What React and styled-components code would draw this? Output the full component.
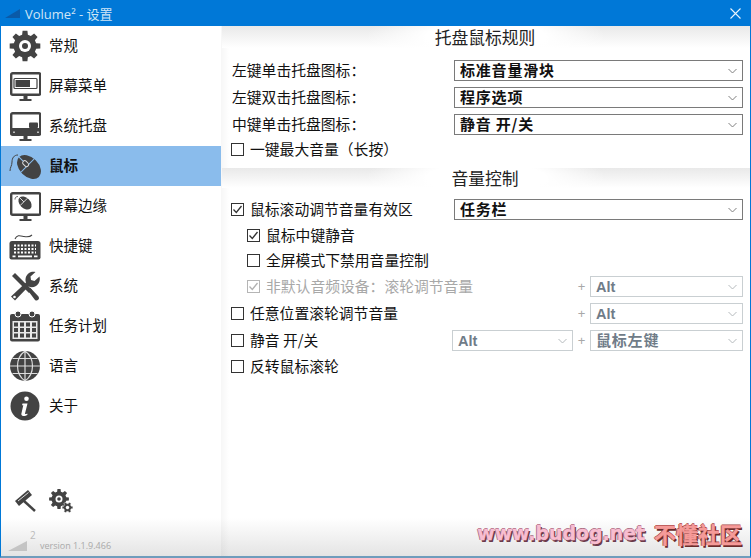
import React from "react";
import styled, { createGlobalStyle } from "styled-components";

const GlobalStyle = createGlobalStyle`
  html, body { margin: 0; padding: 0; overflow: hidden; background: #fff; }
  * { box-sizing: border-box; }
`;

const cjk = `"Noto Sans CJK SC", "Noto Sans", sans-serif`;
const ink = "#434343";

const Window = styled.div`
  position: relative;
  width: 751px;
  height: 558px;
  display: flex;
  flex-direction: column;
  border: 1px solid #0078d7;
  border-top: 0;
  border-bottom: 2px solid #6f9cbc;
  font-family: ${cjk};
  color: #111;
  overflow: hidden;
`;

const TitleBar = styled.div`
  height: 26px;
  flex: none;
  margin: 0 -1px;
  padding: 0 10px 0 5px;
  background: #0078d7;
  color: #cfe5f6;
  font-size: 13px;
  display: flex;
  align-items: center;
  gap: 5px;
`;

const TitleText = styled.span`
  flex: 1;
  font-family: "Open Sans", ${cjk};
`;

const Body = styled.div`
  flex: 1;
  display: flex;
  min-height: 0;
  background: linear-gradient(to bottom, #fff calc(100% - 38px), #e4e4e4 100%);
`;

const Sidebar = styled.nav`
  width: 220px;
  flex: none;
  display: flex;
  flex-direction: column;
`;

const NavItem = styled.div`
  height: 40px;
  padding-left: 8px;
  display: flex;
  align-items: center;
  gap: 8px;
  font-size: 14.5px;
  font-weight: ${(p) => (p.$active ? 700 : 400)};
  background: ${(p) => (p.$active ? "#8abcec" : "transparent")};
`;

const NavLabel = styled.span`
  padding-bottom: 4px;
`;

const NavIcon = styled.svg`
  width: 32px;
  height: 32px;
  flex: none;
`;

const Tools = styled.div`
  margin-top: auto;
  padding: 0 0 0 12px;
  display: flex;
  align-items: center;
  gap: 12px;
`;

const Version = styled.div`
  height: 43px;
  padding: 13px 0 0 7px;
  display: flex;
  color: #a9a9a9;
  font-family: "Open Sans", sans-serif;
  font-size: 9px;
`;

const VersionMark = styled.svg`
  width: 20px;
  height: 30px;
  flex: none;
  overflow: visible;
`;

const VersionText = styled.span`
  margin: 13px 0 0 12px;
`;

const Main = styled.main`
  flex: 1;
  min-width: 0;
  padding-left: 1px;
  display: flex;
  flex-direction: column;
  background: linear-gradient(to right, rgba(0, 0, 0, 0.035), rgba(0, 0, 0, 0) 8px);
`;

const SectionTitle = styled.h2`
  margin: ${(p) => p.$top}px 0 0;
  height: ${(p) => p.$height}px;
  flex: none;
  display: flex;
  align-items: center;
  justify-content: center;
  padding-right: 2px;
  font-size: 16.8px;
  font-weight: 400;
  color: #222;
  background: radial-gradient(ellipse 120px 30px at center, #fff 50%, rgba(255, 255, 255, 0) 100%),
    linear-gradient(to bottom, #e9e9e9, #fff);
`;

const Rows = styled.div`
  padding: 0 7px 0 10px;
`;

const Row = styled.div`
  height: 21px;
  margin-top: ${(p) => p.$top}px;
  padding-left: ${(p) => (p.$indent ? 16 : 0)}px;
  display: flex;
  align-items: center;
  justify-content: space-between;
`;

const Label = styled.label`
  display: flex;
  align-items: center;
  gap: 6px;
  font-size: 14.8px;
  white-space: nowrap;
  color: ${(p) => (p.$disabled ? "#a8a8a8" : "#111")};
`;

const LabelText = styled.span`
  padding-bottom: 2px;
`;

const Box = styled.span`
  width: 13px;
  height: 13px;
  flex: none;
  display: block;
  margin-left: -1px;
  border: 1px solid ${(p) => (p.$disabled ? "#b5b5b5" : "#333")};
  background: #fff;
`;

const Combo = styled.div`
  width: ${(p) => p.$width}px;
  height: 21px;
  flex: none;
  padding: 0 5px;
  display: flex;
  align-items: center;
  justify-content: space-between;
  border: 1px solid ${(p) => (p.$disabled ? "#c9cfd2" : "#7a7a7a")};
  background: #fff;
  font-size: 15px;
  font-weight: 700;
  letter-spacing: 0.8px;
  color: ${(p) => (p.$disabled ? "#707c88" : "#111")};
`;

const ComboText = styled.span`
  padding-bottom: 2px;
`;

const AltText = styled.span`
  font-family: "Liberation Sans", sans-serif;
  font-size: 14.5px;
  letter-spacing: 0;
`;

const Modifiers = styled.div`
  display: flex;
  align-items: center;
`;

const Plus = styled.span`
  width: 17px;
  text-align: center;
  font-family: "Liberation Sans", sans-serif;
  font-size: 13px;
  color: #a8a8a8;
`;

const Watermark = styled.div`
  position: absolute;
  right: 8px;
  bottom: 7px;
  display: flex;
  align-items: center;
  gap: 9px;
  font-weight: 700;
  white-space: nowrap;
`;

const WatermarkUrl = styled.span`
  font-family: "DejaVu Sans", sans-serif;
  font-size: 18.9px;
  color: #f8bdd0;
  -webkit-text-stroke: 0.4px #f8bdd0;
  text-shadow: 1.5px 1.5px 0 #6b3a4a, -1px 0 0 #a86a80, 0 -1px 0 #a86a80;
`;

const WatermarkName = styled.span`
  font-size: 22px;
  color: #f59a98;
  -webkit-text-stroke: 0.4px #f59a98;
  text-shadow: 1.5px 1.5px 0 #6a2a2a, -1px 0 0 #a84a4a, 0 -1px 0 #a84a4a;
`;

function gearPath(cx, cy, outer, inner, teeth) {
  const step = (Math.PI * 2) / teeth;
  const pts = [];
  for (let i = 0; i < teeth; i++) {
    const a = i * step;
    const t = step * 0.2;
    const b = step * 0.32;
    [[-b, inner], [-t, outer], [t, outer], [b, inner]].forEach(([d, r]) => {
      pts.push(`${(cx + Math.cos(a + d) * r).toFixed(2)} ${(cy + Math.sin(a + d) * r).toFixed(2)}`);
    });
  }
  return `M${pts.join("L")}Z`;
}

const Monitor = ({ children }) => (
  <>
    <rect x="2.2" y="3.2" width="29" height="21.5" rx="1.5" fill="#fff" stroke={ink} strokeWidth="2.4" />
    <path d="M14.5 26h4v3h-4z M10.5 29h12v2h-12z" fill={ink} />
    {children}
  </>
);

const icons = {
  gear: (
    <>
      <path d={gearPath(16, 16, 15.5, 11.5, 8)} fill={ink} />
      <circle cx="16" cy="16" r="6" fill="#fff" />
      <circle cx="16" cy="16" r="3" fill={ink} />
    </>
  ),
  menu: (
    <Monitor>
      <rect x="5" y="8.5" width="23" height="10" rx="1" fill="#fff" stroke={ink} strokeWidth="1.2" />
      <rect x="6.5" y="10" width="14.5" height="7" fill={ink} />
    </Monitor>
  ),
  tray: (
    <Monitor>
      <rect x="2.2" y="18" width="29" height="6.7" fill={ink} />
      <rect x="20" y="12.5" width="9" height="5.5" rx="1" fill={ink} />
      <path d="M4 21.5h2v1.5H4z M28 21.5h2v1.5h-2z" fill="#bbb" />
    </Monitor>
  ),
  mouse: (
    <>
      <path d="M9 5C5 5 3 8 3 12c0 4-2 5-2 9" fill="none" stroke={ink} strokeWidth="1" />
      <g transform="translate(20 17) rotate(-45)">
        <ellipse cx="0" cy="0" rx="9.5" ry="14" fill={ink} />
        <path d="M-9 -2 H9 M0 -14 V-2" stroke="#8abcec" strokeWidth="1" fill="none" />
        <rect x="-2" y="-8" width="4" height="6.5" rx="1.8" fill={ink} stroke="#ddd" strokeWidth="1" />
      </g>
    </>
  ),
  edge: (
    <Monitor>
      <path d="M9 6.500c-2 0-3 1-3 3" fill="none" stroke={ink} strokeWidth="0.8" />
      <g transform="translate(16 13) rotate(-45) scale(0.55)">
        <ellipse cx="0" cy="0" rx="9.5" ry="14" fill={ink} />
        <path d="M-9 -3 H9 M0 -14 V-3" stroke="#fff" strokeWidth="1.4" fill="none" />
      </g>
    </Monitor>
  ),
  keys: (
    <>
      <path d="M6 9c2-5 6-3 9-2.500 3 .5 6 .5 8-1.500" fill="none" stroke={ink} strokeWidth="1.1" />
      <path d="M3 11h26q2.500 0 2.500 2.500v14q0 2-2 2h-27q-2 0-2-2v-14q0-2.500 2.500-2.500z" fill={ink} />
      <path
        d="M5 15.500h22 M5 19h22 M5 22.500h22"
        stroke="#fff"
        strokeWidth="2"
        strokeDasharray="2 1.500"
        fill="none"
      />
      <rect x="9" y="25.500" width="14" height="1.800" fill="#fff" />
      <path d="M3.500 25.500h3v1.800h-3z M25 25.500h3.500v1.800H25z" fill="#fff" />
    </>
  ),
  tools: (
    <>
      <path d="M3 6 6 3l3 3 14 14-3 3L6 9z" fill={ink} />
      <path d="M18.500 20 21 17.500l8.500 9a2.500 2.500 0 0 1-3.500 3.500z" fill={ink} />
      <path
        d="M6 30.500 2 26.500l15-14c-1.500-4 .5-9 5-10.500 1.500-.5 3-.5 4.500 0l-5 4.500.5 3.500 3.500 1 5-4.500c1 4-.5 7.500-3.500 9.500-2.500 1.500-5 1.500-7.500.5z"
        fill={ink}
      />
      <circle cx="5.500" cy="27" r="1.300" fill="#fff" />
    </>
  ),
  calendar: (
    <>
      <rect x="1" y="4" width="30" height="27.500" rx="2" fill={ink} />
      <rect x="3.500" y="11" width="25" height="18" fill="#e8e8e8" />
      <circle cx="9" cy="4" r="3" fill={ink} stroke="#fff" strokeWidth="1" />
      <circle cx="23" cy="4" r="3" fill={ink} stroke="#fff" strokeWidth="1" />
      {[12.5, 18, 23.5].map((y) =>
        [5, 11, 17, 23].map((x) => <rect key={`${x}-${y}`} x={x} y={y} width="4" height="4" fill={ink} />)
      )}
    </>
  ),
  globe: (
    <>
      <circle cx="16" cy="16" r="15" fill={ink} />
      <path
        d="M16 1V31 M1 16H31 M3.500 8.500H28.500 M3.500 23.500H28.500 M16 1C6 8 6 24 16 31 M16 1C26 8 26 24 16 31"
        stroke="#ddd"
        strokeWidth="1.200"
        fill="none"
      />
    </>
  ),
  info: (
    <>
      <circle cx="16" cy="16" r="14.500" fill={ink} />
      <circle cx="17.500" cy="8.800" r="2.300" fill="#fff" />
      <path d="M13.500 13.500h5l-2.500 10c0 .8.8.8 2.200 0l.3 1.200c-2 1.500-6 2.200-6.200-.7l2-8.800h-1.300z" fill="#fff" />
    </>
  ),
};

const navItems = [
  ["gear", "常规"],
  ["menu", "屏幕菜单"],
  ["tray", "系统托盘"],
  ["mouse", "鼠标", true],
  ["edge", "屏幕边缘"],
  ["keys", "快捷键"],
  ["tools", "系统"],
  ["calendar", "任务计划"],
  ["globe", "语言"],
  ["info", "关于"],
];

const Chevron = ({ disabled }) => (
  <svg width="9" height="6" viewBox="0 0 9 6">
    <path d="M.5 1 4.500 5 8.500 1" fill="none" stroke={disabled ? "#b5babd" : "#808080"} strokeWidth="1" />
  </svg>
);

const Select = ({ width = 289, disabled, latin, children }) => (
  <Combo $width={width} $disabled={disabled}>
    {latin ? <AltText>{children}</AltText> : <ComboText>{children}</ComboText>}
    <Chevron disabled={disabled} />
  </Combo>
);

const Check = ({ checked, disabled, children }) => (
  <Label $disabled={disabled}>
    <Box $disabled={disabled}>
      {checked && (
        <svg width="11" height="11" viewBox="0 0 11 11" style={{ display: "block" }}>
          <path d="M1.500 5.500 4.300 8.500 9.500 2" fill="none" stroke={disabled ? "#b0b0b0" : "#333"} strokeWidth="1.300" />
        </svg>
      )}
    </Box>
    <LabelText>{children}</LabelText>
  </Label>
);

export default function App() {
  return (
    <>
      <GlobalStyle />
      <Window>
        <TitleBar>
          <svg width="15" height="9" viewBox="0 0 15 9">
            <path d="M0 9 15 0v9z" fill="#0a5aa8" />
          </svg>
          <TitleText>Volume² - 设置</TitleText>
          <svg width="11" height="11" viewBox="0 0 11 11">
            <path d="M.5.5l10 10M10.500.5l-10 10" stroke="#eaf4fc" strokeWidth="1.100" />
          </svg>
        </TitleBar>
        <Body>
          <Sidebar>
            {navItems.map(([icon, text, active]) => (
              <NavItem key={text} $active={active}>
                <NavIcon viewBox="0 0 32 32">{icons[icon]}</NavIcon>
                <NavLabel>{text}</NavLabel>
              </NavItem>
            ))}
            <Tools>
              <svg width="24" height="24" viewBox="0 0 24 24">
                <path d="M2 12 15 1l4 5L6 17z" fill={ink} />
                <path d="M5 12 15.500 3.500" stroke="#ddd" strokeWidth="1" />
                <path d="M11 12 22 22" stroke={ink} strokeWidth="2.500" />
              </svg>
              <svg width="24" height="24" viewBox="0 0 24 24">
                <path d={gearPath(10, 10, 10, 7.500, 8)} fill={ink} />
                <circle cx="10" cy="10" r="3.500" fill="#fff" />
                <circle cx="10" cy="10" r="1.800" fill={ink} />
                <path d={gearPath(18.500, 18.500, 5.500, 4, 6)} fill={ink} stroke="#fff" strokeWidth=".5" />
                <circle cx="18.500" cy="18.500" r="1.700" fill="#fff" />
              </svg>
            </Tools>
            <Version>
              <VersionMark viewBox="0 0 20 30">
                <path d="M0 25 19 15v10z" fill="#c4c4c4" />
                <text x="22" y="13" fontSize="10" fill="#bbb">2</text>
              </VersionMark>
              <VersionText>version 1.1.9.466</VersionText>
            </Version>
          </Sidebar>
          <Main>
            <SectionTitle $top={0} $height={22}>托盘鼠标规则</SectionTitle>
            <Rows>
              <Row $top={12}>
                <Label><LabelText>左键单击托盘图标：</LabelText></Label>
                <Select>标准音量滑块</Select>
              </Row>
              <Row $top={6}>
                <Label><LabelText>左键双击托盘图标：</LabelText></Label>
                <Select>程序选项</Select>
              </Row>
              <Row $top={6}>
                <Label><LabelText>中键单击托盘图标：</LabelText></Label>
                <Select>静音 开/关</Select>
              </Row>
              <Row $top={4}>
                <Check>一键最大音量（长按）</Check>
              </Row>
            </Rows>
            <SectionTitle $top={8} $height={20}>音量控制</SectionTitle>
            <Rows>
              <Row $top={11}>
                <Check checked>鼠标滚动调节音量有效区</Check>
                <Select>任务栏</Select>
              </Row>
              <Row $top={5} $indent>
                <Check checked>鼠标中键静音</Check>
              </Row>
              <Row $top={4} $indent>
                <Check>全屏模式下禁用音量控制</Check>
              </Row>
              <Row $top={5} $indent>
                <Check checked disabled>非默认音频设备：滚轮调节音量</Check>
                <Modifiers>
                  <Plus>+</Plus>
                  <Select width={153} disabled latin>Alt</Select>
                </Modifiers>
              </Row>
              <Row $top={6}>
                <Check>任意位置滚轮调节音量</Check>
                <Modifiers>
                  <Plus>+</Plus>
                  <Select width={153} disabled latin>Alt</Select>
                </Modifiers>
              </Row>
              <Row $top={6}>
                <Check>静音 开/关</Check>
                <Modifiers>
                  <Select width={121} disabled latin>Alt</Select>
                  <Plus>+</Plus>
                  <Select width={153} disabled>鼠标左键</Select>
                </Modifiers>
              </Row>
              <Row $top={5}>
                <Check>反转鼠标滚轮</Check>
              </Row>
            </Rows>
          </Main>
        </Body>
        <Watermark>
          <WatermarkUrl>www.budog.net</WatermarkUrl>
          <WatermarkName>不懂社区</WatermarkName>
        </Watermark>
      </Window>
    </>
  );
}
